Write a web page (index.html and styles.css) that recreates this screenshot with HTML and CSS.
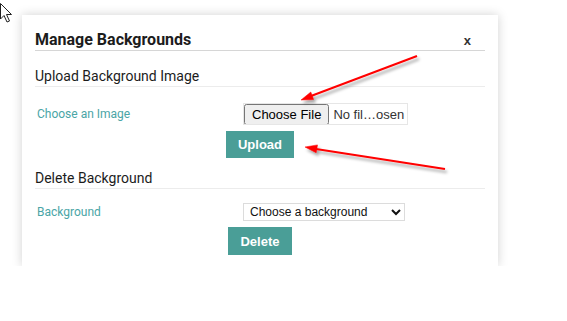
FILE: index.html
```html
<!DOCTYPE html>
<html lang="en">
<head>
  <meta charset="UTF-8">
  <title>Manage Backgrounds</title>
  <link rel="stylesheet" href="styles.css">
</head>
<body>
  <div class="modal">
    <div class="modal-header">
      <h2 class="modal-title">Manage Backgrounds</h2>
      <span class="modal-close">x</span>
    </div>

    <!-- Upload section -->
    <h3 class="section-title section-upload">Upload Background Image</h3>
    <form class="bg-form">
      <div class="form-row row-upload">
        <label class="form-label" for="bg-file">Choose an Image</label>
        <input id="bg-file" class="file-input" type="file" name="image">
      </div>
      <div class="form-actions">
        <button type="button" class="btn">Upload</button>
      </div>
    </form>

    <!-- Delete section -->
    <h3 class="section-title section-delete">Delete Background</h3>
    <form class="bg-form">
      <div class="form-row row-delete">
        <label class="form-label" for="bg-select">Background</label>
        <select id="bg-select" class="bg-select" name="background">
          <option>Choose a background</option>
        </select>
      </div>
      <div class="form-actions">
        <button type="button" class="btn">Delete</button>
      </div>
    </form>
  </div>

  <!-- Annotation overlay: cursor and red arrows -->
  <svg class="overlay" width="567" height="321" viewBox="0 0 567 321">
    <defs>
      <filter id="shade" x="-20%" y="-50%" width="140%" height="200%">
        <feDropShadow dx="2" dy="3" stdDeviation="1.5" flood-color="#000" flood-opacity="0.35"/>
      </filter>
    </defs>
    <path d="M0.5 3.5 L0.5 19 L4 15.5 L7 22 L9.5 21 L6.5 14.5 L11.5 14.5 Z" fill="#fff" stroke="#222" stroke-width="1"/>
    <g filter="url(#shade)" fill="#f00" stroke="#f00">
      <line x1="417" y1="56" x2="311" y2="96" stroke-width="2"/>
      <polygon points="301,100 313.6,99.5 310.8,92" stroke-width="0.5"/>
      <line x1="445" y1="169" x2="316" y2="149" stroke-width="2"/>
      <polygon points="305,147 317.5,144.9 316.2,152.8" stroke-width="0.5"/>
    </g>
  </svg>
</body>
</html>
```

FILE: styles.css
```css
/**
 * Base.
 */
* {
  box-sizing: border-box;
}
body {
  margin: 0;
  padding: 15px 0 0 22px;
  background: #fff;
  font-family: Roboto, "Liberation Sans", sans-serif;
  color: #222;
}

/**
 * Modal card.
 */
.modal {
  width: 476px;
  padding: 0 13px 11px;
  background: #fff;
  box-shadow: 0 0 10px rgba(0, 0, 0, 0.18);
}
.modal-header {
  display: flex;
  justify-content: space-between;
  align-items: center;
  padding-top: 15px;
  border-bottom: 1px solid #d6d6d6;
}
.modal-title {
  margin: 0;
  font-size: 16px;
  line-height: 20px;
  font-weight: bold;
  color: #1c1c1c;
}
.modal-close {
  padding: 0 14px 0 0;
  font-family: "Liberation Sans", Arial, sans-serif;
  font-size: 13px;
  font-weight: bold;
  color: #333;
}

/**
 * Sections.
 */
.section-title {
  margin: 0;
  font-size: 14px;
  line-height: 20px;
  font-weight: normal;
  color: #1c1c1c;
  border-bottom: 1px solid #ececec;
}
.section-upload {
  margin-top: 15px;
}
.section-delete {
  margin-top: 10px;
}

/**
 * Form rows.
 */
.form-row {
  display: grid;
  grid-template-columns: 208px 1fr;
  align-items: center;
}
.row-upload {
  margin-top: 16px;
}
.row-delete {
  margin-top: 14px;
}
.form-label {
  padding-left: 2px;
  font-size: 12px;
  color: #4aa5a6;
}
.file-input {
  width: 165px;
  height: 22px;
  padding: 0;
  border: 1px solid #e6e6e6;
  font-family: "Liberation Sans", Arial, sans-serif;
  font-size: 13px;
  color: #333;
}
.bg-select {
  width: 162px;
  height: 18px;
  padding: 0 2px;
  border: 1px solid #dcdcdc;
  border-radius: 0;
  background: #fff;
  font-family: "Liberation Sans", Arial, sans-serif;
  font-size: 12px;
  color: #111;
}
.form-actions {
  display: flex;
  justify-content: center;
  margin-top: 6px;
}
.btn {
  height: 27px;
  padding: 0 12px;
  border: none;
  background-color: #4a9e97;
  color: #fff;
  font-family: "Liberation Sans", Arial, sans-serif;
  font-size: 13px;
  font-weight: bold;
}
.row-delete + .form-actions .btn {
  height: 28px;
}

/**
 * Annotation overlay.
 */
.overlay {
  position: absolute;
  top: 0;
  left: 0;
  pointer-events: none;
}
```
